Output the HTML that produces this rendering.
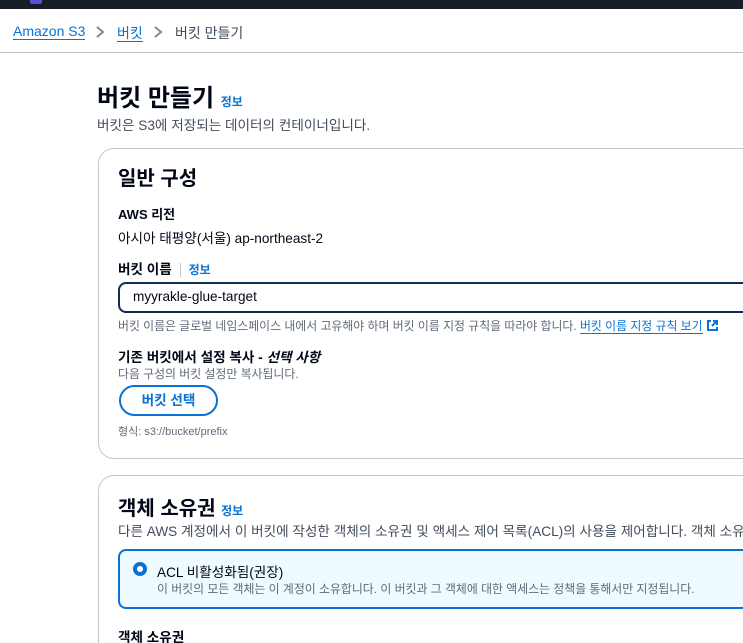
<!DOCTYPE html>
<html><head><meta charset="utf-8"><style>
*{box-sizing:border-box;margin:0;padding:0}
html,body{width:743px;height:643px;overflow:hidden}
body{background:#fff;font-family:"Liberation Sans","Noto Sans CJK KR",sans-serif;color:#000716;position:relative}
.a{position:absolute;white-space:nowrap}
.link{color:#0972d3}
.bold{font-weight:700}
</style></head><body>
<div class="a" style="left:0;top:0;width:743px;height:9px;background:#161d26"></div>
<div class="a" style="left:30px;top:0;width:12px;height:4px;background:#5a4fd6;border-radius:0 0 2px 2px"></div>
<div class="a" style="left:13px;top:23px;font-size:14px"><span class="link" style="border-bottom:1px solid #0972d3">Amazon S3</span></div>
<svg class="a" style="left:95px;top:25px" width="10" height="14"><path d="M2 2l6 5-6 5" fill="none" stroke="#7d8998" stroke-width="2"/></svg>
<div class="a" style="left:117px;top:23px;font-size:14px"><span class="link" style="border-bottom:1px solid #0972d3">버킷</span></div>
<svg class="a" style="left:153px;top:25px" width="10" height="14"><path d="M2 2l6 5-6 5" fill="none" stroke="#7d8998" stroke-width="2"/></svg>
<div class="a" style="left:175px;top:23px;font-size:14px;color:#414d5c">버킷 만들기</div>
<div class="a" style="left:0;top:52px;width:743px;height:1px;background:#b6bec9"></div>

<div class="a bold" style="left:97px;top:78px;font-size:24px">버킷 만들기 <span class="link" style="font-size:12px;font-weight:700">정보</span></div>
<div class="a" style="left:97px;top:114px;font-size:13.6px;color:#414d5c">버킷은 S3에 저장되는 데이터의 컨테이너입니다.</div>

<div class="a" style="left:98px;top:148px;width:700px;height:311px;border:1px solid #c6c6cd;border-radius:16px"></div>
<div class="a bold" style="left:118px;top:162px;font-size:20px">일반 구성</div>
<div class="a bold" style="left:118px;top:204px;font-size:13px">AWS 리전</div>
<div class="a" style="left:118px;top:227px;font-size:13.6px">아시아 태평양(서울) ap-northeast-2</div>
<div class="a bold" style="left:118px;top:258px;font-size:13.6px">버킷 이름 <span style="border-left:1px solid #c6c6cd;margin-left:4px;padding-left:8px;color:#0972d3;font-size:12px">정보</span></div>
<div class="a" style="left:118px;top:282px;width:660px;height:31px;border:2px solid #0f2d55;border-radius:8px;padding:5px 13px;font-size:13.6px">myyrakle-glue-target</div>
<div class="a" style="left:118px;top:317px;font-size:11.9px;color:#5f6b7a">버킷 이름은 글로벌 네임스페이스 내에서 고유해야 하며 버킷 이름 지정 규칙을 따라야 합니다. <span class="link" style="border-bottom:1px solid #0972d3">버킷 이름 지정 규칙 보기</span> <svg width="13" height="13" style="vertical-align:-2px"><path d="M5 2H2v9h9V8M7 2h4v4M11 2L6 7" fill="none" stroke="#0972d3" stroke-width="2"/></svg></div>
<div class="a bold" style="left:118px;top:346px;font-size:13.6px">기존 버킷에서 설정 복사 - <i>선택 사항</i></div>
<div class="a" style="left:118px;top:365px;font-size:11.9px;color:#5f6b7a">다음 구성의 버킷 설정만 복사됩니다.</div>
<div class="a bold" style="left:119px;top:385px;width:99px;height:31px;border:2px solid #0972d3;border-radius:16px;color:#0972d3;font-size:13.6px;text-align:center;line-height:27px">버킷 선택</div>
<div class="a" style="left:118px;top:423px;font-size:11px;color:#5f6b7a">형식: s3://bucket/prefix</div>

<div class="a" style="left:98px;top:475px;width:700px;height:200px;border:1px solid #c6c6cd;border-radius:16px"></div>
<div class="a bold" style="left:118px;top:492px;font-size:20px">객체 소유권 <span class="link" style="font-size:12px">정보</span></div>
<div class="a" style="left:118px;top:520px;font-size:13.6px;color:#414d5c">다른 AWS 계정에서 이 버킷에 작성한 객체의 소유권 및 액세스 제어 목록(ACL)의 사용을 제어합니다. 객체 소유권</div>
<div class="a" style="left:118px;top:549px;width:660px;height:60px;border:2px solid #0972d3;border-radius:8px;background:#f0fbff"></div>
<div class="a" style="left:133px;top:562px;width:14px;height:14px;border-radius:50%;border:4px solid #0972d3;background:#fff"></div>
<div class="a" style="left:157px;top:561px;font-size:13.6px">ACL 비활성화됨(권장)</div>
<div class="a" style="left:157px;top:580px;font-size:11.9px;color:#5f6b7a">이 버킷의 모든 객체는 이 계정이 소유합니다. 이 버킷과 그 객체에 대한 액세스는 정책을 통해서만 지정됩니다.</div>
<div class="a bold" style="left:118px;top:626px;font-size:13.6px">객체 소유권</div>
</body></html>
